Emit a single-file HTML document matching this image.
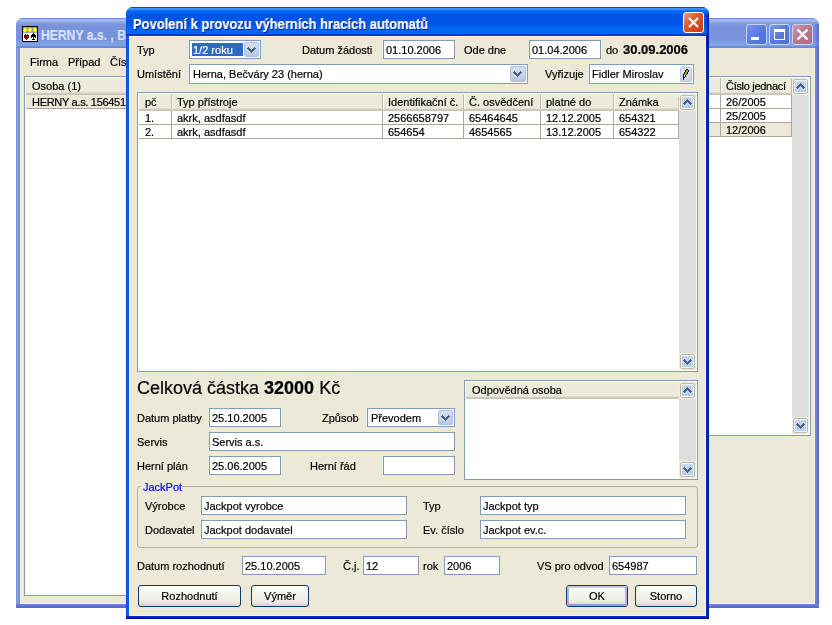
<!DOCTYPE html><html><head><meta charset="utf-8"><style>
html,body{margin:0;padding:0;background:#fff;width:832px;height:625px;overflow:hidden;position:relative;font-family:"Liberation Sans",sans-serif;}
div{position:absolute;}
.t{white-space:nowrap;color:#000;will-change:transform;-webkit-text-stroke:0.2px currentColor;}
</style></head><body>
<div style="position:absolute;left:16px;top:18px;width:803px;height:590px;background:#7485d9;border-radius:7px 7px 0 0;"></div>
<div style="position:absolute;left:16px;top:18px;width:803px;height:30px;border-radius:7px 7px 0 0;background:linear-gradient(#7390dc 0px,#7390dc 1px,#a2baeb 1px,#a2baeb 3px,#8ba6e5 4px,#7c97de 6px,#7893dc 8px,#7893dc 22px,#7ea1e4 24px,#7ea2e4 28px,#7390dc 28px,#6a82d6 30px);"></div>
<div style="position:absolute;left:815px;top:24px;width:4px;height:24px;background:linear-gradient(90deg,rgba(80,100,200,0.25),rgba(70,85,195,0.6));"></div>
<div style="position:absolute;left:16px;top:48px;width:4px;height:560px;background:linear-gradient(90deg,#7489dc,#8aa0e6,#7b90e0,#6f84d8);"></div>
<div style="position:absolute;left:815px;top:48px;width:4px;height:560px;background:linear-gradient(90deg,#7489dc,#6f80d6,#6070cc,#5a66c8);"></div>
<div style="position:absolute;left:16px;top:604px;width:803px;height:4px;background:linear-gradient(#7287db,#6a7fd6,#5f70cc,#5666c6);"></div>
<div style="position:absolute;left:20px;top:48px;width:795px;height:556px;background:#ece9d8;"></div>
<div style="position:absolute;left:20px;top:48px;width:1px;height:556px;background:#f7f3e3;"></div>
<div style="position:absolute;left:20px;top:603px;width:795px;height:1px;background:#f7f3e3;"></div>
<div style="position:absolute;left:814px;top:48px;width:1px;height:556px;background:#f7f3e3;"></div>
<svg style="position:absolute;left:22px;top:26px" width="16" height="16" shape-rendering="crispEdges"><rect x="0" y="0" width="16" height="16" fill="#000"/><rect x="1" y="1" width="14" height="14" fill="#fff"/><rect x="1" y="1" width="14" height="6" fill="#a0a0a0"/><rect x="2" y="2" width="2" height="1" fill="#ff0"/><rect x="1" y="3" width="4" height="2" fill="#ff0"/><rect x="2" y="5" width="2" height="1" fill="#ff0"/><rect x="7" y="2" width="2" height="1" fill="#ff0"/><rect x="6" y="3" width="4" height="2" fill="#ff0"/><rect x="7" y="5" width="2" height="1" fill="#ff0"/><rect x="12" y="2" width="2" height="1" fill="#ff0"/><rect x="11" y="3" width="4" height="2" fill="#ff0"/><rect x="12" y="5" width="2" height="1" fill="#ff0"/><rect x="3" y="8" width="1" height="1" fill="#800000"/><rect x="5" y="8" width="1" height="1" fill="#800000"/><rect x="2" y="9" width="5" height="3" fill="#800000"/><rect x="3" y="12" width="3" height="1" fill="#800000"/><rect x="4" y="13" width="1" height="1" fill="#800000"/><rect x="11" y="7" width="1" height="1" fill="#000"/><rect x="10" y="8" width="3" height="1" fill="#000"/><rect x="9" y="9" width="5" height="2" fill="#000"/><rect x="9" y="11" width="1" height="1" fill="#000"/><rect x="11" y="11" width="1" height="1" fill="#000"/><rect x="13" y="11" width="1" height="1" fill="#000"/><rect x="11" y="12" width="1" height="1" fill="#000"/><rect x="10" y="13" width="3" height="1" fill="#000"/></svg>
<div class="t" style="left:41px;top:27px;font-size:14px;line-height:16px;font-weight:bold;color:#d8e2f8;transform:scaleX(0.87);transform-origin:0 0;">HERNY a.s. , B</div>
<div style="position:absolute;left:746px;top:24px;width:21px;height:21px;box-sizing:border-box;border:1px solid #c6d2f4;border-radius:3px;background:linear-gradient(135deg,#7f95e8,#5a7be0 50%,#4f70de);"></div>
<div style="position:absolute;left:751px;top:37px;width:8px;height:3px;background:#fff;"></div>
<div style="position:absolute;left:769px;top:24px;width:21px;height:21px;box-sizing:border-box;border:1px solid #c6d2f4;border-radius:3px;background:linear-gradient(135deg,#7f95e8,#5a7be0 50%,#4f70de);"></div>
<div style="position:absolute;left:774px;top:29px;width:11px;height:11px;box-sizing:border-box;border:1px solid #fff;border-top-width:3px;"></div>
<div style="position:absolute;left:792px;top:24px;width:21px;height:21px;box-sizing:border-box;border:1px solid #c6d2f4;border-radius:3px;background:linear-gradient(135deg,#c99ab0,#b8768f 50%,#b16a86);"></div>
<svg style="position:absolute;left:792px;top:24px" width="21" height="21"><path d="M5.5 5.5 L15.5 15.5 M15.5 5.5 L5.5 15.5" stroke="#fff" stroke-width="2.4" /></svg>
<div class="t" style="left:30px;top:56px;font-size:11px;line-height:13px;">Firma</div>
<div class="t" style="left:68px;top:56px;font-size:11px;line-height:13px;">Případ</div>
<div class="t" style="left:110px;top:56px;font-size:11px;line-height:13px;">Číselníky</div>
<div style="position:absolute;left:24px;top:76px;width:107px;height:520px;box-sizing:border-box;border:1px solid #7f9db9;background:#fff;"></div>
<div style="position:absolute;left:26px;top:78px;width:105px;height:17px;background:#ebeadb;"></div>
<div style="position:absolute;left:26px;top:92px;width:105px;height:1px;background:#e2decd;"></div>
<div style="position:absolute;left:26px;top:93px;width:105px;height:1px;background:#d3cfbe;"></div>
<div style="position:absolute;left:26px;top:94px;width:105px;height:1px;background:#c5c1b0;"></div>
<div class="t" style="left:32px;top:80px;font-size:11px;line-height:13px;">Osoba (1)</div>
<div style="position:absolute;left:26px;top:95px;width:105px;height:13px;background:#ece9d8;"></div>
<div style="position:absolute;left:26px;top:108px;width:105px;height:1px;background:#aca899;"></div>
<div class="t" style="left:32px;top:96px;font-size:11px;line-height:13px;letter-spacing:-0.3px;">HERNY a.s. 156451</div>
<div style="position:absolute;left:690px;top:76px;width:121px;height:360px;box-sizing:border-box;border:1px solid #7f9db9;border-left:none;background:#fff;"></div>
<div style="position:absolute;left:690px;top:78px;width:102px;height:17px;background:#ebeadb;"></div>
<div style="position:absolute;left:690px;top:92px;width:102px;height:1px;background:#e2decd;"></div>
<div style="position:absolute;left:690px;top:93px;width:102px;height:1px;background:#d3cfbe;"></div>
<div style="position:absolute;left:690px;top:94px;width:102px;height:1px;background:#c5c1b0;"></div>
<div style="position:absolute;left:720px;top:78px;width:1px;height:15px;background:#bdb9a8;"></div>
<div style="position:absolute;left:721px;top:78px;width:1px;height:15px;background:#ffffff;"></div>
<div class="t" style="left:726px;top:80px;font-size:11px;line-height:13px;letter-spacing:-0.3px;">Číslo jednací</div>
<div style="position:absolute;left:690px;top:108px;width:102px;height:1px;background:#aca899;"></div>
<div style="position:absolute;left:690px;top:122px;width:102px;height:1px;background:#aca899;"></div>
<div style="position:absolute;left:690px;top:123px;width:102px;height:13px;background:#ece9d8;"></div>
<div style="position:absolute;left:690px;top:136px;width:102px;height:1px;background:#aca899;"></div>
<div style="position:absolute;left:720px;top:95px;width:1px;height:42px;background:#aca899;"></div>
<div style="position:absolute;left:791px;top:95px;width:1px;height:42px;background:#aca899;"></div>
<div style="position:absolute;left:791px;top:78px;width:1px;height:15px;background:#bdb9a8;"></div>
<div class="t" style="left:726px;top:96px;font-size:11px;line-height:13px;">26/2005</div>
<div class="t" style="left:726px;top:110px;font-size:11px;line-height:13px;">25/2005</div>
<div class="t" style="left:726px;top:124px;font-size:11px;line-height:13px;">12/2006</div>
<div style="position:absolute;left:792px;top:78px;width:17px;height:356px;background:#dedede;"></div>
<div style="position:absolute;left:792px;top:78px;width:17px;height:17px;background:#f0eee1;"></div>
<div style="position:absolute;left:793px;top:79px;width:15px;height:15px;box-sizing:border-box;border:1px solid #bcb8a5;border-radius:2px;background:#f6f4ea;"></div>
<div style="position:absolute;left:795px;top:81px;width:11px;height:11px;background:linear-gradient(#c6d6f2,#bccdee);"></div>
<svg style="position:absolute;left:796px;top:83px" width="9" height="6" shape-rendering="crispEdges" fill="#4d6185"><rect x="4" y="0" width="1" height="1"/><rect x="3" y="1" width="1" height="1"/><rect x="4" y="1" width="1" height="1"/><rect x="5" y="1" width="1" height="1"/><rect x="2" y="2" width="1" height="1"/><rect x="3" y="2" width="1" height="1"/><rect x="4" y="2" width="1" height="1"/><rect x="5" y="2" width="1" height="1"/><rect x="6" y="2" width="1" height="1"/><rect x="1" y="3" width="1" height="1"/><rect x="2" y="3" width="1" height="1"/><rect x="3" y="3" width="1" height="1"/><rect x="5" y="3" width="1" height="1"/><rect x="6" y="3" width="1" height="1"/><rect x="7" y="3" width="1" height="1"/><rect x="0" y="4" width="1" height="1"/><rect x="1" y="4" width="1" height="1"/><rect x="2" y="4" width="1" height="1"/><rect x="6" y="4" width="1" height="1"/><rect x="7" y="4" width="1" height="1"/><rect x="8" y="4" width="1" height="1"/><rect x="1" y="5" width="1" height="1"/><rect x="7" y="5" width="1" height="1"/></svg>
<div style="position:absolute;left:792px;top:417px;width:17px;height:17px;background:#f0eee1;"></div>
<div style="position:absolute;left:793px;top:418px;width:15px;height:15px;box-sizing:border-box;border:1px solid #bcb8a5;border-radius:2px;background:#f6f4ea;"></div>
<div style="position:absolute;left:795px;top:420px;width:11px;height:11px;background:linear-gradient(#c6d6f2,#bccdee);"></div>
<svg style="position:absolute;left:796px;top:423px" width="9" height="6" shape-rendering="crispEdges" fill="#4d6185"><rect x="1" y="0" width="1" height="1"/><rect x="7" y="0" width="1" height="1"/><rect x="0" y="1" width="1" height="1"/><rect x="1" y="1" width="1" height="1"/><rect x="2" y="1" width="1" height="1"/><rect x="6" y="1" width="1" height="1"/><rect x="7" y="1" width="1" height="1"/><rect x="8" y="1" width="1" height="1"/><rect x="1" y="2" width="1" height="1"/><rect x="2" y="2" width="1" height="1"/><rect x="3" y="2" width="1" height="1"/><rect x="5" y="2" width="1" height="1"/><rect x="6" y="2" width="1" height="1"/><rect x="7" y="2" width="1" height="1"/><rect x="2" y="3" width="1" height="1"/><rect x="3" y="3" width="1" height="1"/><rect x="4" y="3" width="1" height="1"/><rect x="5" y="3" width="1" height="1"/><rect x="6" y="3" width="1" height="1"/><rect x="3" y="4" width="1" height="1"/><rect x="4" y="4" width="1" height="1"/><rect x="5" y="4" width="1" height="1"/><rect x="4" y="5" width="1" height="1"/></svg>
<div style="position:absolute;left:126px;top:7px;width:583px;height:612px;background:#0831d9;border-radius:7px 7px 0 0;"></div>
<div style="position:absolute;left:126px;top:7px;width:583px;height:29px;border-radius:7px 7px 0 0;background:linear-gradient(#0a48e0 0px,#0a48e0 1px,#3d8fff 1px,#3d8fff 3px,#1070ff 3px,#0060f0 6px,#0055e5 7px,#0055e5 18px,#0066f8 20px,#0066f8 27px,#0040d0 27px,#0838c8 29px);"></div>
<div style="position:absolute;left:706px;top:14px;width:3px;height:22px;background:linear-gradient(90deg,rgba(0,40,190,0.4),rgba(0,20,150,0.8));"></div>
<div style="position:absolute;left:126px;top:36px;width:3px;height:583px;background:linear-gradient(90deg,#0842d8,#0a5ef5,#0655ee);"></div>
<div style="position:absolute;left:706px;top:36px;width:3px;height:583px;background:linear-gradient(90deg,#0030c0,#0020b0,#001890);"></div>
<div style="position:absolute;left:126px;top:616px;width:583px;height:3px;background:linear-gradient(#0838d8,#001ca8,#001080);"></div>
<div style="position:absolute;left:129px;top:36px;width:577px;height:580px;background:#ece9d8;"></div>
<div style="position:absolute;left:129px;top:36px;width:577px;height:1px;background:#f7f3e3;"></div>
<div style="position:absolute;left:129px;top:36px;width:1px;height:580px;background:#f7f3e3;"></div>
<div style="position:absolute;left:129px;top:615px;width:577px;height:1px;background:#f7f3e3;"></div>
<div style="position:absolute;left:705px;top:36px;width:1px;height:580px;background:#f7f3e3;"></div>
<div class="t" style="left:133px;top:16px;font-size:14px;line-height:16px;font-weight:bold;color:#fff;text-shadow:1px 1px 0 #0a1a80;transform:scaleX(0.925);transform-origin:0 0;">Povolení k provozu výherních hracích automatů</div>
<div style="position:absolute;left:683px;top:12px;width:21px;height:21px;box-sizing:border-box;border:1px solid #fff;border-radius:3px;background:linear-gradient(135deg,#e8a080,#e0582f 40%,#c83a10);"></div>
<svg style="position:absolute;left:683px;top:12px" width="21" height="21"><path d="M6 6 L15 15 M15 6 L6 15" stroke="#fff" stroke-width="2.2" /></svg>
<div class="t" style="left:137px;top:44px;font-size:11px;line-height:13px;">Typ</div>
<div style="position:absolute;left:189px;top:40px;width:72px;height:19px;box-sizing:border-box;border:1px solid #7f9db9;background:#fff;"></div>
<div style="position:absolute;left:244px;top:42px;width:15px;height:15px;box-sizing:border-box;border:1px solid #a9c1ea;border-radius:2px;background:linear-gradient(#d5e0f4,#c6d3ea 60%,#b9c6dd);"></div>
<svg style="position:absolute;left:247px;top:47px" width="9" height="6" shape-rendering="crispEdges" fill="#4d6185"><rect x="1" y="0" width="1" height="1"/><rect x="7" y="0" width="1" height="1"/><rect x="0" y="1" width="1" height="1"/><rect x="1" y="1" width="1" height="1"/><rect x="2" y="1" width="1" height="1"/><rect x="6" y="1" width="1" height="1"/><rect x="7" y="1" width="1" height="1"/><rect x="8" y="1" width="1" height="1"/><rect x="1" y="2" width="1" height="1"/><rect x="2" y="2" width="1" height="1"/><rect x="3" y="2" width="1" height="1"/><rect x="5" y="2" width="1" height="1"/><rect x="6" y="2" width="1" height="1"/><rect x="7" y="2" width="1" height="1"/><rect x="2" y="3" width="1" height="1"/><rect x="3" y="3" width="1" height="1"/><rect x="4" y="3" width="1" height="1"/><rect x="5" y="3" width="1" height="1"/><rect x="6" y="3" width="1" height="1"/><rect x="3" y="4" width="1" height="1"/><rect x="4" y="4" width="1" height="1"/><rect x="5" y="4" width="1" height="1"/><rect x="4" y="5" width="1" height="1"/></svg>
<div style="position:absolute;left:192px;top:43px;width:51px;height:13px;background:#316ac5;"></div>
<div class="t" style="left:193px;top:44px;font-size:11px;line-height:13px;color:#fff;">1/2 roku</div>
<div class="t" style="left:302px;top:44px;font-size:11px;line-height:13px;">Datum žádosti</div>
<div style="position:absolute;left:383px;top:40px;width:72px;height:19px;box-sizing:border-box;border:1px solid #7f9db9;background:#fff;"></div>
<div class="t" style="left:386px;top:44px;font-size:11px;line-height:13px;">01.10.2006</div>
<div class="t" style="left:464px;top:44px;font-size:11px;line-height:13px;">Ode dne</div>
<div style="position:absolute;left:529px;top:40px;width:72px;height:19px;box-sizing:border-box;border:1px solid #7f9db9;background:#fff;"></div>
<div class="t" style="left:532px;top:44px;font-size:11px;line-height:13px;">01.04.2006</div>
<div class="t" style="left:606px;top:44px;font-size:11px;line-height:13px;">do</div>
<div class="t" style="left:623px;top:42px;font-size:13px;line-height:16px;font-weight:bold;">30.09.2006</div>
<div class="t" style="left:137px;top:68px;font-size:11px;line-height:13px;">Umístění</div>
<div style="position:absolute;left:189px;top:64px;width:339px;height:20px;box-sizing:border-box;border:1px solid #7f9db9;background:#fff;"></div>
<div style="position:absolute;left:510px;top:66px;width:16px;height:16px;box-sizing:border-box;border:1px solid #a9c1ea;border-radius:2px;background:linear-gradient(#d5e0f4,#c6d3ea 60%,#b9c6dd);"></div>
<svg style="position:absolute;left:513px;top:71px" width="9" height="6" shape-rendering="crispEdges" fill="#4d6185"><rect x="1" y="0" width="1" height="1"/><rect x="7" y="0" width="1" height="1"/><rect x="0" y="1" width="1" height="1"/><rect x="1" y="1" width="1" height="1"/><rect x="2" y="1" width="1" height="1"/><rect x="6" y="1" width="1" height="1"/><rect x="7" y="1" width="1" height="1"/><rect x="8" y="1" width="1" height="1"/><rect x="1" y="2" width="1" height="1"/><rect x="2" y="2" width="1" height="1"/><rect x="3" y="2" width="1" height="1"/><rect x="5" y="2" width="1" height="1"/><rect x="6" y="2" width="1" height="1"/><rect x="7" y="2" width="1" height="1"/><rect x="2" y="3" width="1" height="1"/><rect x="3" y="3" width="1" height="1"/><rect x="4" y="3" width="1" height="1"/><rect x="5" y="3" width="1" height="1"/><rect x="6" y="3" width="1" height="1"/><rect x="3" y="4" width="1" height="1"/><rect x="4" y="4" width="1" height="1"/><rect x="5" y="4" width="1" height="1"/><rect x="4" y="5" width="1" height="1"/></svg>
<div class="t" style="left:193px;top:68px;font-size:11px;line-height:13px;">Herna, Bečváry 23 (herna)</div>
<div class="t" style="left:545px;top:68px;font-size:11px;line-height:13px;">Vyřizuje</div>
<div style="position:absolute;left:589px;top:64px;width:105px;height:20px;box-sizing:border-box;border:1px solid #7f9db9;background:#fff;"></div>
<div class="t" style="left:592px;top:68px;font-size:11px;line-height:13px;">Fidler Miroslav</div>
<div style="position:absolute;left:680px;top:67px;width:12px;height:15px;box-sizing:border-box;border:1px solid #b0c6f0;border-radius:2px;background:linear-gradient(#dde4f2,#c8d2e6);"></div>
<svg style="position:absolute;left:672px;top:62px" width="26" height="24" shape-rendering="crispEdges"><rect x="14" y="7" width="1" height="1" fill="#000"/><rect x="15" y="7" width="1" height="1" fill="#000"/><rect x="13" y="8" width="1" height="1" fill="#000"/><rect x="14" y="8" width="1" height="1" fill="#a8a800"/><rect x="15" y="8" width="1" height="1" fill="#a8a800"/><rect x="16" y="8" width="1" height="1" fill="#000"/><rect x="13" y="9" width="1" height="1" fill="#000"/><rect x="14" y="9" width="1" height="1" fill="#a8a800"/><rect x="15" y="9" width="1" height="1" fill="#a8a800"/><rect x="16" y="9" width="1" height="1" fill="#000"/><rect x="12" y="10" width="1" height="1" fill="#000"/><rect x="13" y="10" width="1" height="1" fill="#a8a800"/><rect x="14" y="10" width="1" height="1" fill="#a8a800"/><rect x="15" y="10" width="1" height="1" fill="#000"/><rect x="12" y="11" width="1" height="1" fill="#000"/><rect x="13" y="11" width="1" height="1" fill="#a8a800"/><rect x="14" y="11" width="1" height="1" fill="#a8a800"/><rect x="15" y="11" width="1" height="1" fill="#000"/><rect x="11" y="12" width="1" height="1" fill="#000"/><rect x="12" y="12" width="1" height="1" fill="#a8a800"/><rect x="13" y="12" width="1" height="1" fill="#a8a800"/><rect x="14" y="12" width="1" height="1" fill="#000"/><rect x="11" y="13" width="1" height="1" fill="#000"/><rect x="12" y="13" width="1" height="1" fill="#e8e8e8"/><rect x="13" y="13" width="1" height="1" fill="#000"/><rect x="11" y="14" width="1" height="1" fill="#000"/><rect x="12" y="14" width="1" height="1" fill="#e8e8e8"/><rect x="13" y="14" width="1" height="1" fill="#000"/><rect x="11" y="15" width="1" height="1" fill="#000"/><rect x="12" y="15" width="1" height="1" fill="#000"/><rect x="11" y="16" width="1" height="1" fill="#000"/><rect x="11" y="17" width="1" height="1" fill="#000"/></svg>
<div style="position:absolute;left:137px;top:92px;width:561px;height:280px;box-sizing:border-box;border:1px solid #7f9db9;background:#fff;"></div>
<div style="position:absolute;left:139px;top:94px;width:540px;height:17px;background:#ebeadb;"></div>
<div style="position:absolute;left:139px;top:108px;width:540px;height:1px;background:#e2decd;"></div>
<div style="position:absolute;left:139px;top:109px;width:540px;height:1px;background:#d3cfbe;"></div>
<div style="position:absolute;left:139px;top:110px;width:540px;height:1px;background:#c5c1b0;"></div>
<div style="position:absolute;left:171px;top:94px;width:1px;height:15px;background:#bdb9a8;"></div>
<div style="position:absolute;left:172px;top:94px;width:1px;height:15px;background:#ffffff;"></div>
<div style="position:absolute;left:382px;top:94px;width:1px;height:15px;background:#bdb9a8;"></div>
<div style="position:absolute;left:383px;top:94px;width:1px;height:15px;background:#ffffff;"></div>
<div style="position:absolute;left:463px;top:94px;width:1px;height:15px;background:#bdb9a8;"></div>
<div style="position:absolute;left:464px;top:94px;width:1px;height:15px;background:#ffffff;"></div>
<div style="position:absolute;left:540px;top:94px;width:1px;height:15px;background:#bdb9a8;"></div>
<div style="position:absolute;left:541px;top:94px;width:1px;height:15px;background:#ffffff;"></div>
<div style="position:absolute;left:613px;top:94px;width:1px;height:15px;background:#bdb9a8;"></div>
<div style="position:absolute;left:614px;top:94px;width:1px;height:15px;background:#ffffff;"></div>
<div style="position:absolute;left:678px;top:97px;width:1px;height:11px;background:#cbc7b8;"></div>
<div class="t" style="left:145px;top:96px;font-size:11px;line-height:13px;">pč</div>
<div class="t" style="left:177px;top:96px;font-size:11px;line-height:13px;">Typ přístroje</div>
<div class="t" style="left:388px;top:96px;font-size:11px;line-height:13px;">Identifikační č.</div>
<div class="t" style="left:469px;top:96px;font-size:11px;line-height:13px;">Č. osvědčení</div>
<div class="t" style="left:546px;top:96px;font-size:11px;line-height:13px;">platné do</div>
<div class="t" style="left:619px;top:96px;font-size:11px;line-height:13px;">Známka</div>
<div style="position:absolute;left:139px;top:124px;width:540px;height:1px;background:#aca899;"></div>
<div class="t" style="left:145px;top:112px;font-size:11px;line-height:13px;">1.</div>
<div class="t" style="left:177px;top:112px;font-size:11px;line-height:13px;">akrk, asdfasdf</div>
<div class="t" style="left:388px;top:112px;font-size:11px;line-height:13px;">2566658797</div>
<div class="t" style="left:469px;top:112px;font-size:11px;line-height:13px;">65464645</div>
<div class="t" style="left:546px;top:112px;font-size:11px;line-height:13px;">12.12.2005</div>
<div class="t" style="left:619px;top:112px;font-size:11px;line-height:13px;">654321</div>
<div style="position:absolute;left:139px;top:138px;width:540px;height:1px;background:#aca899;"></div>
<div class="t" style="left:145px;top:126px;font-size:11px;line-height:13px;">2.</div>
<div class="t" style="left:177px;top:126px;font-size:11px;line-height:13px;">akrk, asdfasdf</div>
<div class="t" style="left:388px;top:126px;font-size:11px;line-height:13px;">654654</div>
<div class="t" style="left:469px;top:126px;font-size:11px;line-height:13px;">4654565</div>
<div class="t" style="left:546px;top:126px;font-size:11px;line-height:13px;">13.12.2005</div>
<div class="t" style="left:619px;top:126px;font-size:11px;line-height:13px;">654322</div>
<div style="position:absolute;left:171px;top:111px;width:1px;height:28px;background:#aca899;"></div>
<div style="position:absolute;left:382px;top:111px;width:1px;height:28px;background:#aca899;"></div>
<div style="position:absolute;left:463px;top:111px;width:1px;height:28px;background:#aca899;"></div>
<div style="position:absolute;left:540px;top:111px;width:1px;height:28px;background:#aca899;"></div>
<div style="position:absolute;left:613px;top:111px;width:1px;height:28px;background:#aca899;"></div>
<div style="position:absolute;left:678px;top:111px;width:1px;height:28px;background:#aca899;"></div>
<div style="position:absolute;left:679px;top:94px;width:17px;height:276px;background:#dedede;"></div>
<div style="position:absolute;left:679px;top:94px;width:17px;height:17px;background:#f0eee1;"></div>
<div style="position:absolute;left:680px;top:95px;width:15px;height:15px;box-sizing:border-box;border:1px solid #bcb8a5;border-radius:2px;background:#f6f4ea;"></div>
<div style="position:absolute;left:682px;top:97px;width:11px;height:11px;background:linear-gradient(#c6d6f2,#bccdee);"></div>
<svg style="position:absolute;left:683px;top:99px" width="9" height="6" shape-rendering="crispEdges" fill="#4d6185"><rect x="4" y="0" width="1" height="1"/><rect x="3" y="1" width="1" height="1"/><rect x="4" y="1" width="1" height="1"/><rect x="5" y="1" width="1" height="1"/><rect x="2" y="2" width="1" height="1"/><rect x="3" y="2" width="1" height="1"/><rect x="4" y="2" width="1" height="1"/><rect x="5" y="2" width="1" height="1"/><rect x="6" y="2" width="1" height="1"/><rect x="1" y="3" width="1" height="1"/><rect x="2" y="3" width="1" height="1"/><rect x="3" y="3" width="1" height="1"/><rect x="5" y="3" width="1" height="1"/><rect x="6" y="3" width="1" height="1"/><rect x="7" y="3" width="1" height="1"/><rect x="0" y="4" width="1" height="1"/><rect x="1" y="4" width="1" height="1"/><rect x="2" y="4" width="1" height="1"/><rect x="6" y="4" width="1" height="1"/><rect x="7" y="4" width="1" height="1"/><rect x="8" y="4" width="1" height="1"/><rect x="1" y="5" width="1" height="1"/><rect x="7" y="5" width="1" height="1"/></svg>
<div style="position:absolute;left:679px;top:353px;width:17px;height:17px;background:#f0eee1;"></div>
<div style="position:absolute;left:680px;top:354px;width:15px;height:15px;box-sizing:border-box;border:1px solid #bcb8a5;border-radius:2px;background:#f6f4ea;"></div>
<div style="position:absolute;left:682px;top:356px;width:11px;height:11px;background:linear-gradient(#c6d6f2,#bccdee);"></div>
<svg style="position:absolute;left:683px;top:359px" width="9" height="6" shape-rendering="crispEdges" fill="#4d6185"><rect x="1" y="0" width="1" height="1"/><rect x="7" y="0" width="1" height="1"/><rect x="0" y="1" width="1" height="1"/><rect x="1" y="1" width="1" height="1"/><rect x="2" y="1" width="1" height="1"/><rect x="6" y="1" width="1" height="1"/><rect x="7" y="1" width="1" height="1"/><rect x="8" y="1" width="1" height="1"/><rect x="1" y="2" width="1" height="1"/><rect x="2" y="2" width="1" height="1"/><rect x="3" y="2" width="1" height="1"/><rect x="5" y="2" width="1" height="1"/><rect x="6" y="2" width="1" height="1"/><rect x="7" y="2" width="1" height="1"/><rect x="2" y="3" width="1" height="1"/><rect x="3" y="3" width="1" height="1"/><rect x="4" y="3" width="1" height="1"/><rect x="5" y="3" width="1" height="1"/><rect x="6" y="3" width="1" height="1"/><rect x="3" y="4" width="1" height="1"/><rect x="4" y="4" width="1" height="1"/><rect x="5" y="4" width="1" height="1"/><rect x="4" y="5" width="1" height="1"/></svg>
<div class="t" style="left:137px;top:378px;font-size:18px;line-height:21px;">Celková částka <b>32000</b> Kč</div>
<div class="t" style="left:137px;top:412px;font-size:11px;line-height:13px;">Datum platby</div>
<div style="position:absolute;left:209px;top:408px;width:72px;height:19px;box-sizing:border-box;border:1px solid #7f9db9;background:#fff;"></div>
<div class="t" style="left:212px;top:412px;font-size:11px;line-height:13px;">25.10.2005</div>
<div class="t" style="left:322px;top:412px;font-size:11px;line-height:13px;">Způsob</div>
<div style="position:absolute;left:367px;top:408px;width:88px;height:19px;box-sizing:border-box;border:1px solid #7f9db9;background:#fff;"></div>
<div style="position:absolute;left:438px;top:410px;width:15px;height:15px;box-sizing:border-box;border:1px solid #a9c1ea;border-radius:2px;background:linear-gradient(#d5e0f4,#c6d3ea 60%,#b9c6dd);"></div>
<svg style="position:absolute;left:441px;top:415px" width="9" height="6" shape-rendering="crispEdges" fill="#4d6185"><rect x="1" y="0" width="1" height="1"/><rect x="7" y="0" width="1" height="1"/><rect x="0" y="1" width="1" height="1"/><rect x="1" y="1" width="1" height="1"/><rect x="2" y="1" width="1" height="1"/><rect x="6" y="1" width="1" height="1"/><rect x="7" y="1" width="1" height="1"/><rect x="8" y="1" width="1" height="1"/><rect x="1" y="2" width="1" height="1"/><rect x="2" y="2" width="1" height="1"/><rect x="3" y="2" width="1" height="1"/><rect x="5" y="2" width="1" height="1"/><rect x="6" y="2" width="1" height="1"/><rect x="7" y="2" width="1" height="1"/><rect x="2" y="3" width="1" height="1"/><rect x="3" y="3" width="1" height="1"/><rect x="4" y="3" width="1" height="1"/><rect x="5" y="3" width="1" height="1"/><rect x="6" y="3" width="1" height="1"/><rect x="3" y="4" width="1" height="1"/><rect x="4" y="4" width="1" height="1"/><rect x="5" y="4" width="1" height="1"/><rect x="4" y="5" width="1" height="1"/></svg>
<div class="t" style="left:371px;top:412px;font-size:11px;line-height:13px;">Převodem</div>
<div class="t" style="left:137px;top:436px;font-size:11px;line-height:13px;">Servis</div>
<div style="position:absolute;left:209px;top:432px;width:246px;height:19px;box-sizing:border-box;border:1px solid #7f9db9;background:#fff;"></div>
<div class="t" style="left:212px;top:436px;font-size:11px;line-height:13px;">Servis a.s.</div>
<div class="t" style="left:137px;top:460px;font-size:11px;line-height:13px;">Herní plán</div>
<div style="position:absolute;left:209px;top:456px;width:72px;height:19px;box-sizing:border-box;border:1px solid #7f9db9;background:#fff;"></div>
<div class="t" style="left:212px;top:460px;font-size:11px;line-height:13px;">25.06.2005</div>
<div class="t" style="left:310px;top:460px;font-size:11px;line-height:13px;">Herní řád</div>
<div style="position:absolute;left:383px;top:456px;width:72px;height:19px;box-sizing:border-box;border:1px solid #7f9db9;background:#fff;"></div>
<div style="position:absolute;left:464px;top:380px;width:234px;height:100px;box-sizing:border-box;border:1px solid #7f9db9;background:#fff;"></div>
<div style="position:absolute;left:466px;top:382px;width:213px;height:17px;background:#ebeadb;"></div>
<div style="position:absolute;left:466px;top:396px;width:213px;height:1px;background:#e2decd;"></div>
<div style="position:absolute;left:466px;top:397px;width:213px;height:1px;background:#d3cfbe;"></div>
<div style="position:absolute;left:466px;top:398px;width:213px;height:1px;background:#c5c1b0;"></div>
<div class="t" style="left:472px;top:384px;font-size:11px;line-height:13px;">Odpovědná osoba</div>
<div style="position:absolute;left:679px;top:382px;width:17px;height:96px;background:#dedede;"></div>
<div style="position:absolute;left:679px;top:382px;width:17px;height:17px;background:#f0eee1;"></div>
<div style="position:absolute;left:680px;top:383px;width:15px;height:15px;box-sizing:border-box;border:1px solid #bcb8a5;border-radius:2px;background:#f6f4ea;"></div>
<div style="position:absolute;left:682px;top:385px;width:11px;height:11px;background:linear-gradient(#c6d6f2,#bccdee);"></div>
<svg style="position:absolute;left:683px;top:387px" width="9" height="6" shape-rendering="crispEdges" fill="#4d6185"><rect x="4" y="0" width="1" height="1"/><rect x="3" y="1" width="1" height="1"/><rect x="4" y="1" width="1" height="1"/><rect x="5" y="1" width="1" height="1"/><rect x="2" y="2" width="1" height="1"/><rect x="3" y="2" width="1" height="1"/><rect x="4" y="2" width="1" height="1"/><rect x="5" y="2" width="1" height="1"/><rect x="6" y="2" width="1" height="1"/><rect x="1" y="3" width="1" height="1"/><rect x="2" y="3" width="1" height="1"/><rect x="3" y="3" width="1" height="1"/><rect x="5" y="3" width="1" height="1"/><rect x="6" y="3" width="1" height="1"/><rect x="7" y="3" width="1" height="1"/><rect x="0" y="4" width="1" height="1"/><rect x="1" y="4" width="1" height="1"/><rect x="2" y="4" width="1" height="1"/><rect x="6" y="4" width="1" height="1"/><rect x="7" y="4" width="1" height="1"/><rect x="8" y="4" width="1" height="1"/><rect x="1" y="5" width="1" height="1"/><rect x="7" y="5" width="1" height="1"/></svg>
<div style="position:absolute;left:679px;top:461px;width:17px;height:17px;background:#f0eee1;"></div>
<div style="position:absolute;left:680px;top:462px;width:15px;height:15px;box-sizing:border-box;border:1px solid #bcb8a5;border-radius:2px;background:#f6f4ea;"></div>
<div style="position:absolute;left:682px;top:464px;width:11px;height:11px;background:linear-gradient(#c6d6f2,#bccdee);"></div>
<svg style="position:absolute;left:683px;top:467px" width="9" height="6" shape-rendering="crispEdges" fill="#4d6185"><rect x="1" y="0" width="1" height="1"/><rect x="7" y="0" width="1" height="1"/><rect x="0" y="1" width="1" height="1"/><rect x="1" y="1" width="1" height="1"/><rect x="2" y="1" width="1" height="1"/><rect x="6" y="1" width="1" height="1"/><rect x="7" y="1" width="1" height="1"/><rect x="8" y="1" width="1" height="1"/><rect x="1" y="2" width="1" height="1"/><rect x="2" y="2" width="1" height="1"/><rect x="3" y="2" width="1" height="1"/><rect x="5" y="2" width="1" height="1"/><rect x="6" y="2" width="1" height="1"/><rect x="7" y="2" width="1" height="1"/><rect x="2" y="3" width="1" height="1"/><rect x="3" y="3" width="1" height="1"/><rect x="4" y="3" width="1" height="1"/><rect x="5" y="3" width="1" height="1"/><rect x="6" y="3" width="1" height="1"/><rect x="3" y="4" width="1" height="1"/><rect x="4" y="4" width="1" height="1"/><rect x="5" y="4" width="1" height="1"/><rect x="4" y="5" width="1" height="1"/></svg>
<div style="position:absolute;left:137px;top:486px;width:561px;height:62px;box-sizing:border-box;border:1px solid #b3b0a0;border-radius:3px;"></div>
<div style="position:absolute;left:141px;top:480px;width:41px;height:13px;background:#ece9d8;"></div>
<div class="t" style="left:143px;top:481px;font-size:11px;line-height:13px;color:#0000ff;">JackPot</div>
<div class="t" style="left:145px;top:500px;font-size:11px;line-height:13px;">Výrobce</div>
<div style="position:absolute;left:201px;top:496px;width:206px;height:19px;box-sizing:border-box;border:1px solid #7f9db9;background:#fff;"></div>
<div class="t" style="left:204px;top:500px;font-size:11px;line-height:13px;">Jackpot vyrobce</div>
<div class="t" style="left:423px;top:500px;font-size:11px;line-height:13px;">Typ</div>
<div style="position:absolute;left:480px;top:496px;width:206px;height:19px;box-sizing:border-box;border:1px solid #7f9db9;background:#fff;"></div>
<div class="t" style="left:483px;top:500px;font-size:11px;line-height:13px;">Jackpot typ</div>
<div class="t" style="left:145px;top:524px;font-size:11px;line-height:13px;">Dodavatel</div>
<div style="position:absolute;left:201px;top:520px;width:206px;height:19px;box-sizing:border-box;border:1px solid #7f9db9;background:#fff;"></div>
<div class="t" style="left:204px;top:524px;font-size:11px;line-height:13px;">Jackpot dodavatel</div>
<div class="t" style="left:423px;top:524px;font-size:11px;line-height:13px;">Ev. číslo</div>
<div style="position:absolute;left:480px;top:520px;width:206px;height:19px;box-sizing:border-box;border:1px solid #7f9db9;background:#fff;"></div>
<div class="t" style="left:483px;top:524px;font-size:11px;line-height:13px;">Jackpot ev.c.</div>
<div class="t" style="left:137px;top:560px;font-size:11px;line-height:13px;">Datum rozhodnutí</div>
<div style="position:absolute;left:242px;top:556px;width:84px;height:19px;box-sizing:border-box;border:1px solid #7f9db9;background:#fff;"></div>
<div class="t" style="left:245px;top:560px;font-size:11px;line-height:13px;">25.10.2005</div>
<div class="t" style="left:343px;top:560px;font-size:11px;line-height:13px;">Č.j.</div>
<div style="position:absolute;left:363px;top:556px;width:56px;height:19px;box-sizing:border-box;border:1px solid #7f9db9;background:#fff;"></div>
<div class="t" style="left:366px;top:560px;font-size:11px;line-height:13px;">12</div>
<div class="t" style="left:423px;top:560px;font-size:11px;line-height:13px;">rok</div>
<div style="position:absolute;left:444px;top:556px;width:56px;height:19px;box-sizing:border-box;border:1px solid #7f9db9;background:#fff;"></div>
<div class="t" style="left:447px;top:560px;font-size:11px;line-height:13px;">2006</div>
<div class="t" style="left:537px;top:560px;font-size:11px;line-height:13px;">VS pro odvod</div>
<div style="position:absolute;left:609px;top:556px;width:88px;height:19px;box-sizing:border-box;border:1px solid #7f9db9;background:#fff;"></div>
<div class="t" style="left:612px;top:560px;font-size:11px;line-height:13px;">654987</div>
<div style="position:absolute;left:138px;top:585px;width:103px;height:22px;box-sizing:border-box;border:1px solid #003c74;border-radius:3px;background:linear-gradient(#ffffff 0%,#f4f3ee 40%,#eceae2 80%,#d8d3c6 100%);"></div>
<div class="t" style="left:138px;top:590px;width:103px;text-align:center;font-size:11px;line-height:13px;">Rozhodnutí</div>
<div style="position:absolute;left:251px;top:585px;width:58px;height:22px;box-sizing:border-box;border:1px solid #003c74;border-radius:3px;background:linear-gradient(#ffffff 0%,#f4f3ee 40%,#eceae2 80%,#d8d3c6 100%);"></div>
<div class="t" style="left:251px;top:590px;width:58px;text-align:center;font-size:11px;line-height:13px;">Výměr</div>
<div style="position:absolute;left:566px;top:585px;width:62px;height:22px;box-sizing:border-box;border:1px solid #003c74;border-radius:3px;background:linear-gradient(#ffffff 0%,#f4f3ee 40%,#eceae2 80%,#d8d3c6 100%);"></div>
<div style="position:absolute;left:567px;top:586px;width:60px;height:20px;box-sizing:border-box;border:2px solid #b2b2e2;border-top-color:#c6c6ee;border-bottom-color:#9c9bd0;border-radius:2px;"></div>
<div class="t" style="left:566px;top:590px;width:62px;text-align:center;font-size:11px;line-height:13px;">OK</div>
<div style="position:absolute;left:635px;top:585px;width:62px;height:22px;box-sizing:border-box;border:1px solid #003c74;border-radius:3px;background:linear-gradient(#ffffff 0%,#f4f3ee 40%,#eceae2 80%,#d8d3c6 100%);"></div>
<div class="t" style="left:635px;top:590px;width:62px;text-align:center;font-size:11px;line-height:13px;">Storno</div>
</body></html>
